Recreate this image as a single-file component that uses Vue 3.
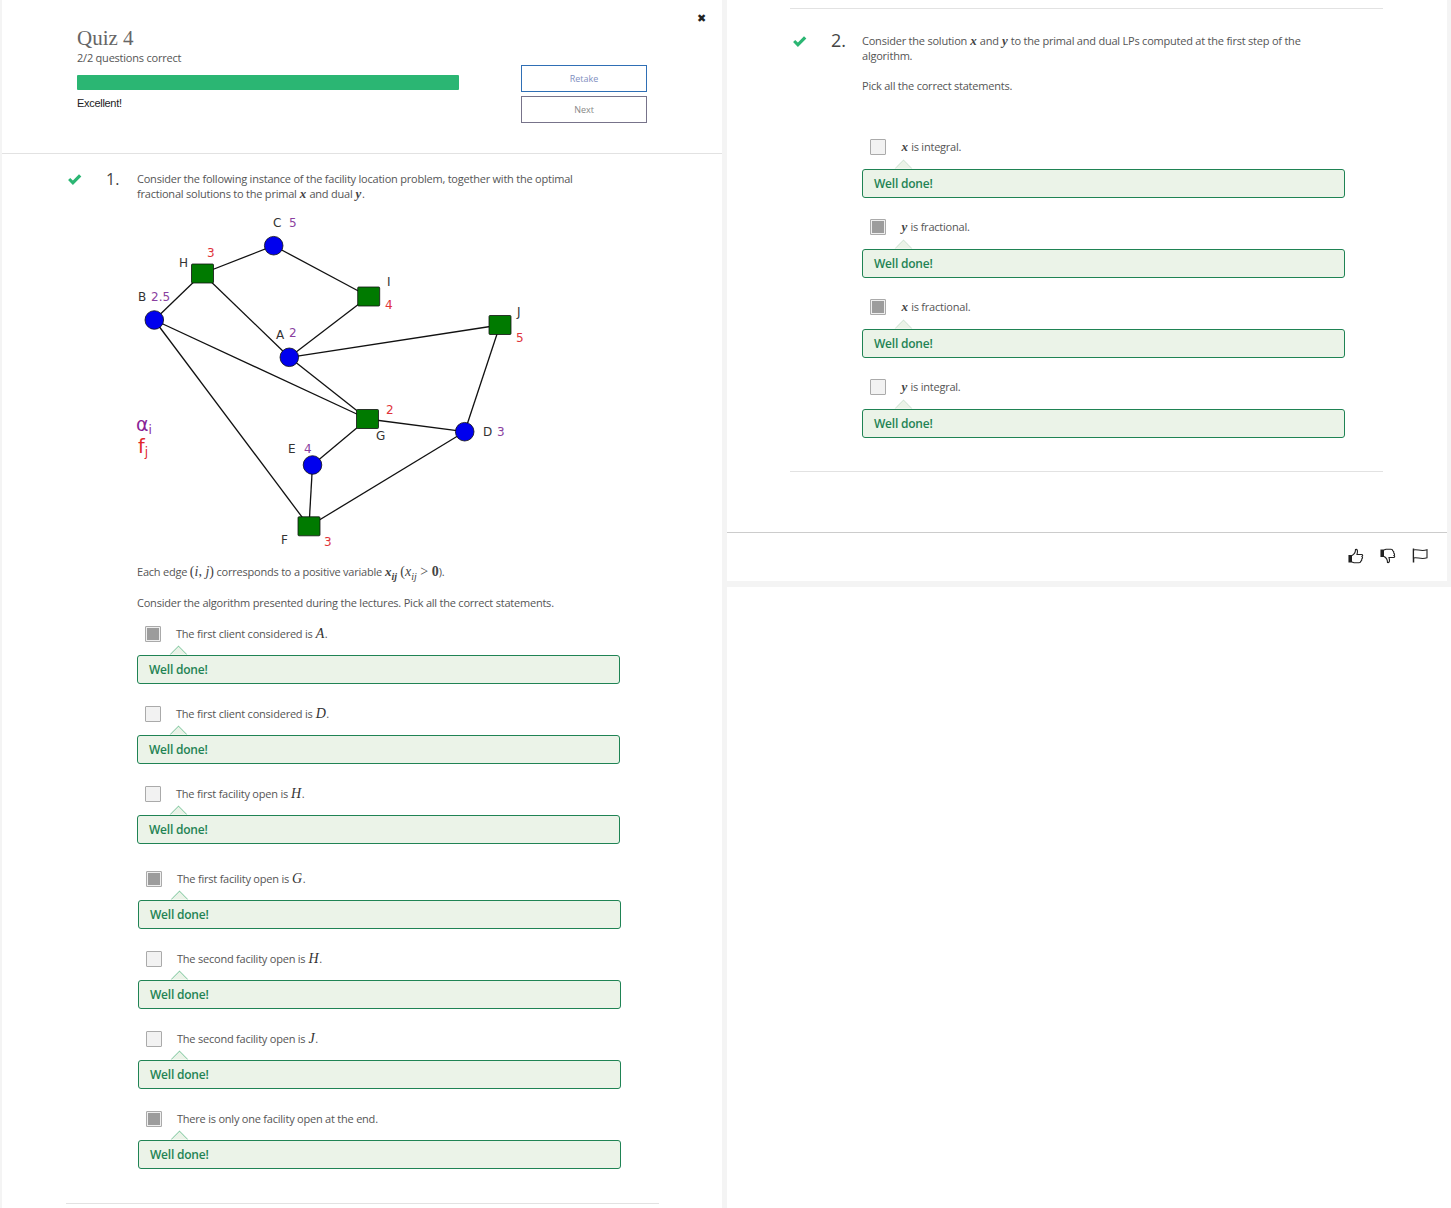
<template>
  <div class="page">
    <!-- left panel: quiz summary and question 1 -->
    <section class="panel left">
      <header class="summary">
        <div class="score">
          <h1>Quiz 4</h1>
          <p class="count">2/2 questions correct</p>
          <div class="bar"></div>
          <p class="verdict">Excellent!</p>
        </div>
        <div class="actions">
          <button class="retake">Retake</button>
          <button class="next">Next</button>
        </div>
        <span class="close">✖</span>
      </header>

      <article class="question first">
        <svg class="tick" viewBox="0 0 14 12"><path d="M1 6.5 L3 4.5 L5.5 7 L11.2 1 L13.4 3.2 L5.5 11.2 Z" /></svg>
        <span class="num">1.</span>
        <div class="body">
          <p class="lead">Consider the following instance of the facility location problem, together with the optimal fractional solutions to the primal <i class="m">x</i> and dual <i class="m">y</i>.</p>

          <svg class="graph" width="420" height="350" viewBox="120 205 420 350">
            <line v-for="(e, i) in edges" :key="i" :x1="nodes[e[0]][0]" :y1="nodes[e[0]][1]" :x2="nodes[e[1]][0]" :y2="nodes[e[1]][1]" stroke="#111" stroke-width="1.3" />
            <template v-for="(n, k) in nodes" :key="k">
              <circle v-if="n[2] === 'c'" :cx="n[0]" :cy="n[1]" r="9.3" fill="#0000ee" stroke="#111" stroke-width="0.8" />
              <rect v-else :x="n[0] - 11" :y="n[1] - 9.5" width="22" height="19" rx="1" fill="#007a00" stroke="#111" stroke-width="0.8" />
            </template>
            <text v-for="l in labels" :key="l[0] + l[1]" :x="l[1]" :y="l[2]" :fill="l[3]" class="glabel">{{ l[0] }}</text>
            <text x="136" y="431" class="legend" fill="#8a1f96">α<tspan class="sub" dy="3">i</tspan></text>
            <text x="138" y="453" class="legend" fill="#e0252b">f<tspan class="sub" dy="3">j</tspan></text>
          </svg>

          <p class="edge-note">Each edge <span class="mb">(<i>i</i>, <i>j</i>)</span> corresponds to a positive variable <i class="m">x<sub>ij</sub></i> <span class="mb">(<i>x<sub>ij</sub></i> &gt; <b>0</b></span>).</p>
          <p class="pick">Consider the algorithm presented during the lectures. Pick all the correct statements.</p>

          <div class="options">
            <div v-for="o in firstOptions" :key="o.text + o.math" class="option" :class="{ shifted: o.shifted }">
              <div class="choice">
                <span class="box" :class="{ on: o.on }"></span>
                <span class="label">{{ o.text }} <i v-if="o.math" class="m big">{{ o.math }}</i><template v-if="o.math">.</template></span>
              </div>
              <div class="feedback">Well done!</div>
            </div>
          </div>
        </div>
      </article>
      <hr class="rule" />
    </section>

    <div class="right-col">
      <!-- right panel: question 2 -->
      <section class="panel right">
        <div class="inner">
          <hr class="rule top" />
          <article class="question second">
            <svg class="tick" viewBox="0 0 14 12"><path d="M1 6.5 L3 4.5 L5.5 7 L11.2 1 L13.4 3.2 L5.5 11.2 Z" /></svg>
            <span class="num">2.</span>
            <div class="body">
              <p class="lead">Consider the solution <i class="m">x</i> and <i class="m">y</i> to the primal and dual LPs computed at the first step of the algorithm.</p>
              <p class="pick-two">Pick all the correct statements.</p>
              <div class="options two">
                <div v-for="o in secondOptions" :key="o.math + o.text" class="option">
                  <div class="choice">
                    <span class="box" :class="{ on: o.on }"></span>
                    <span class="label"><i class="m">{{ o.math }}</i> {{ o.text }}</span>
                  </div>
                  <div class="feedback pale">Well done!</div>
                </div>
              </div>
            </div>
          </article>
          <hr class="rule bottom" />
        </div>
        <footer class="foot">
          <svg class="ficon" viewBox="0 0 16 16"><path d="M1 7.5 H4 V14 H1 Z" fill="#222" /><path d="M4 7.5 C6 6.5 7.5 4.5 7.5 1.5 C9.5 1 10 3 9 6.5 H13.5 C15 6.5 15 8 14 8.5 C15 9.5 14.5 10.5 13.7 11 C14 12 13.5 13 12.7 13.2 C12.7 14.3 12 14.7 11 14.7 H6 L4 14" /></svg>
          <svg class="ficon" viewBox="0 0 16 16"><path d="M1 2 H4 V8.5 H1 Z" fill="#222" /><path d="M4 8.5 C6 9.5 7.5 11.5 7.5 14.5 C9.5 15 10 13 9 9.5 H13.5 C15 9.5 15 8 14 7.5 C15 6.5 14.5 5.5 13.7 5 C14 4 13.5 3 12.7 2.8 C12.7 1.7 12 1.3 11 1.3 H6 L4 2" /></svg>
          <svg class="ficon" viewBox="0 0 16 16"><path d="M1.5 0.5 V14.5" stroke-width="1.5" /><path d="M1.5 2 C5 0.8 9 3.8 15 1.8 V9.8 C9 11.8 5 8.8 1.5 10 Z" /></svg>
        </footer>
      </section>
      <div class="filler"></div>
    </div>
  </div>
</template>

<script setup>
const nodes = {
  C: [273.7, 245.7, 'c'],
  H: [202.5, 273.5, 's'],
  I: [368.7, 296.5, 's'],
  J: [500, 325, 's'],
  B: [154.3, 320, 'c'],
  A: [289.3, 357.3, 'c'],
  G: [367.5, 419, 's'],
  D: [464.7, 431.7, 'c'],
  E: [312.5, 465, 'c'],
  F: [309, 526.3, 's']
}

const edges = [
  ['H', 'C'], ['C', 'I'], ['H', 'B'], ['H', 'A'], ['I', 'A'], ['A', 'J'], ['A', 'G'],
  ['B', 'G'], ['B', 'F'], ['G', 'D'], ['G', 'E'], ['E', 'F'], ['F', 'D'], ['J', 'D']
]

const ink = '#333'
const purple = '#8a3fa0'
const red = '#e0333a'

const labels = [
  ['C', 273, 227, ink], ['5', 289, 227, purple],
  ['3', 207, 257, red], ['H', 179, 267, ink],
  ['I', 387, 286, ink], ['4', 385, 309, red],
  ['J', 517, 316, ink], ['5', 516, 342, red],
  ['B', 138, 301, ink], ['2.5', 151, 301, purple],
  ['A', 276, 339, ink], ['2', 289, 337, purple],
  ['2', 386, 414, red], ['G', 376, 440, ink],
  ['D', 483, 436, ink], ['3', 497, 436, purple],
  ['E', 288, 453, ink], ['4', 304, 453, purple],
  ['F', 281, 544, ink], ['3', 324, 546, red]
]

const firstOptions = [
  { text: 'The first client considered is', math: 'A', on: true },
  { text: 'The first client considered is', math: 'D', on: false },
  { text: 'The first facility open is', math: 'H', on: false },
  { text: 'The first facility open is', math: 'G', on: true, shifted: true },
  { text: 'The second facility open is', math: 'H', on: false },
  { text: 'The second facility open is', math: 'J', on: false },
  { text: 'There is only one facility open at the end.', on: true }
]

const secondOptions = [
  { math: 'x', text: 'is integral.', on: false },
  { math: 'y', text: 'is fractional.', on: true },
  { math: 'x', text: 'is fractional.', on: true },
  { math: 'y', text: 'is integral.', on: false }
]
</script>

<style>
html, body {
  background: #fff;
}
</style>

<style scoped>
.page {
  display: flex;
  align-items: flex-start;
  gap: 5px;
  width: 1451px;
  height: 1208px;
  overflow: hidden;
  background: #f4f4f4;
  font-family: "Open Sans", sans-serif;
  font-size: 11px;
  letter-spacing: -0.22px;
  color: #555;
}

.panel {
  background: #fff;
  width: 720px;
}

.left {
  margin-left: 2px;
  height: 1208px;
}

.summary {
  position: relative;
  display: flex;
  height: 153px;
  padding: 0 0 0 75px;
  box-sizing: content-box;
  border-bottom: 1px solid #e2e2e2;
}

.score {
  width: 382px;
  padding-top: 25px;
}

h1 {
  margin: 0;
  font-family: "Liberation Serif", serif;
  font-weight: 400;
  font-size: 21px;
  letter-spacing: 0;
  line-height: 26px;
  color: #666;
}

.count {
  margin: 0;
  line-height: 14px;
  color: #555;
}

.bar {
  height: 15px;
  margin-top: 10px;
  background: #2bb673;
  border-radius: 1px;
}

.verdict {
  margin: 6px 0 0;
  font-family: "Liberation Sans", sans-serif;
  letter-spacing: -0.3px;
  line-height: 14px;
  color: #222;
}

.actions {
  display: flex;
  flex-direction: column;
  gap: 4px;
  margin: 65px 0 0 62px;
}

.actions button {
  width: 126px;
  height: 27px;
  background: #fff;
  font-family: "Open Sans", sans-serif;
  font-size: 9px;
  padding: 0;
}

.retake {
  border: 1px solid #2f6fb5;
  color: #7f8fc0;
}

.next {
  border: 1px solid #77738a;
  color: #888;
}

.close {
  position: absolute;
  left: 695px;
  top: 12px;
  font-family: "DejaVu Sans", sans-serif;
  font-size: 11px;
  line-height: 14px;
  color: #222;
}

.question {
  display: flex;
}

.first {
  padding: 17px 0 0 65px;
}

.tick {
  width: 15px;
  height: 13px;
  margin-top: 2px;
  fill: #2bb673;
  flex: none;
}

.num {
  width: 31px;
  margin-left: 24px;
  flex: none;
  font-size: 16px;
  line-height: 16px;
  letter-spacing: 0;
  color: #444;
}

.body {
  flex: none;
}

.first .body {
  width: 484px;
}

.lead {
  margin: 0;
  line-height: 15px;
  width: 445px;
}

.graph {
  display: block;
  margin: 4px 0 0 -17px;
}

.glabel {
  font-family: "DejaVu Sans", sans-serif;
  font-size: 12px;
  letter-spacing: 0;
}

.legend {
  font-family: "DejaVu Sans", sans-serif;
  font-size: 19px;
  letter-spacing: 0;
}

.sub {
  font-size: 12px;
}

.m {
  padding: 0 0.5px;
  font-family: "Liberation Serif", serif;
  font-weight: 700;
  font-style: italic;
  font-size: 13px;
  letter-spacing: 0;
  line-height: 0;
  color: #444;
}

.m.big {
  font-weight: 400;
  font-size: 14px;
  color: #333;
}

.m sub, .mb sub {
  font-size: 10px;
  line-height: 0;
}

.mb {
  font-family: "Liberation Serif", serif;
  font-size: 14px;
  letter-spacing: 0;
  line-height: 0;
  color: #444;
}

.edge-note {
  margin: 9px 0 0;
  line-height: 15px;
}

.pick {
  margin: 16px 0 0;
  line-height: 15px;
}

.options {
  margin-top: 16px;
}

.option {
  height: 80px;
}

.option.shifted {
  margin-top: 5px;
}

.option.shifted,
.option.shifted ~ .option {
  margin-left: 1px;
}

.choice {
  display: flex;
  align-items: center;
  height: 16px;
  padding-left: 8px;
}

.box {
  width: 16px;
  height: 16px;
  box-sizing: border-box;
  border: 1px solid #aaa;
  border-radius: 1px;
  background: #f2f2f2;
  flex: none;
}

.box.on {
  background: #9c9c9c;
  box-shadow: inset 0 0 0 1px #eee;
}

.label {
  margin: -2px 0 0 15px;
  white-space: nowrap;
}

.feedback {
  position: relative;
  box-sizing: border-box;
  width: 483px;
  height: 29px;
  margin-top: 13px;
  padding-left: 11px;
  background: #ebf3e8;
  border: 1px solid #1f8354;
  border-radius: 3px;
  font-size: 12px;
  font-weight: 600;
  line-height: 27px;
  color: #1f8354;
}

/* little arrow pointing from the feedback box up to its option */
.feedback::before {
  content: "";
  position: absolute;
  left: 34px;
  top: -8px;
  width: 13px;
  height: 13px;
  box-sizing: border-box;
  background: #ebf3e8;
  border-top: 1px solid #7fc8a0;
  border-left: 1px solid #7fc8a0;
  transform: rotate(45deg);
  clip-path: polygon(0 0, 100% 0, 0 100%);
}

.feedback.pale::before {
  border-color: #cfe3d4;
}

.rule {
  border: 0;
  height: 1px;
  margin: 0;
  background: #e2e2e2;
}

.left > .rule {
  margin: 12px 0 0 64px;
  width: 593px;
}

.right-col {
  display: flex;
  flex-direction: column;
  width: 724px;
  height: 1208px;
}

.right {
  height: 581px;
  flex: none;
  display: flex;
  flex-direction: column;
}

.filler {
  flex: 1;
  margin-top: 6px;
  background: #fff;
}

.inner {
  height: 533px;
  padding: 8px 0 0 63px;
  box-sizing: border-box;
  border-bottom: 1px solid #ccc;
}

.rule.top,
.rule.bottom {
  width: 593px;
}

.second {
  padding: 24px 0 0 2px;
  height: 462px;
  box-sizing: border-box;
}

.second .body {
  width: 483px;
}

.second .lead {
  width: 445px;
}

.second .num {
  width: 31px;
  margin-left: 24px;
  font-size: 18px;
  line-height: 14px;
}

.pick-two {
  margin: 15px 0 0;
  line-height: 15px;
}

.options.two {
  margin-top: 46px;
}

.two .feedback {
  margin-top: 14px;
}

.foot {
  display: flex;
  justify-content: flex-end;
  gap: 16px;
  padding: 15px 19px 0 0;
}

.ficon {
  width: 16px;
  height: 16px;
  fill: #fff;
  stroke: #222;
  stroke-width: 1.1;
}
</style>
